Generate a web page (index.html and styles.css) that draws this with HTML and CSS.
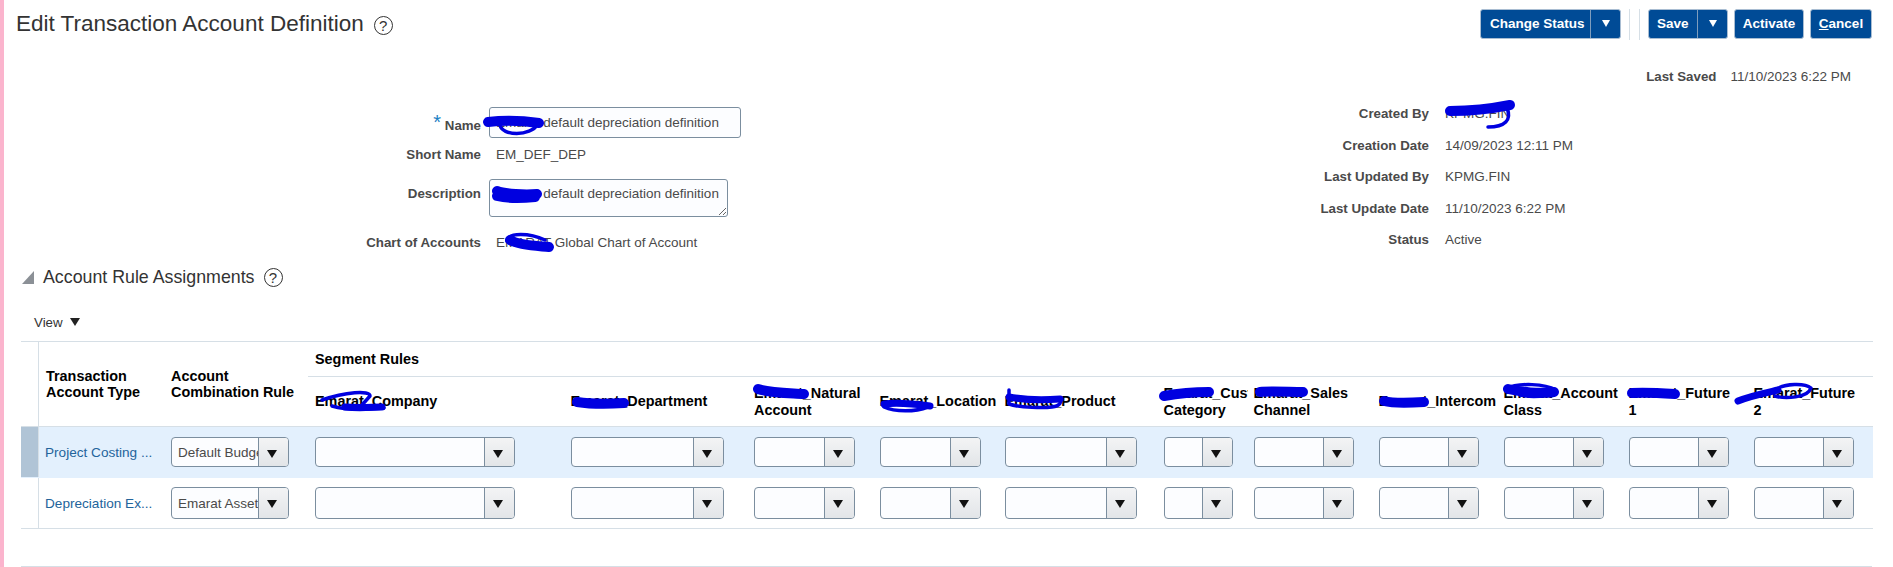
FILE: index.html
```html
<!DOCTYPE html>
<html lang="en">
<head>
<meta charset="utf-8">
<title>Edit Transaction Account Definition</title>
<link rel="stylesheet" href="styles.css">
</head>
<body>
<main class="page">
  <header class="page-head">
    <h1 class="title">Edit Transaction Account Definition</h1>
    <span class="help">?</span>
    <div class="actions">
      <div class="btn split status"><span class="btn-label">Change Status</span><span class="btn-arrow"></span></div>
      <span class="sep"></span>
      <div class="btn split save"><span class="btn-label">Save</span><span class="btn-arrow"></span></div>
      <div class="btn activate"><span class="btn-label">Activate</span></div>
      <div class="btn cancel"><span class="btn-label"><u>C</u>ancel</span></div>
    </div>
  </header>

  <div class="last-saved"><span class="label">Last Saved</span><span class="value">11/10/2023 6:22 PM</span></div>

  <section class="forms">
    <div class="form-left">
      <label class="label row-name"><span class="req">*</span> Name</label>
      <input class="text-input row-name" value="Emarat default depreciation definition">
      <span class="label row-short">Short Name</span>
      <span class="value row-short">EM_DEF_DEP</span>
      <label class="label label-top">Description</label>
      <textarea class="text-area">Emarat default depreciation definition</textarea>
      <span class="label row-chart">Chart of Accounts</span>
      <span class="value row-chart">EMARAT Global Chart of Account</span>
    </div>
    <div class="form-right">
      <span class="label">Created By</span><span class="value">KPMG.FIN</span>
      <span class="label">Creation Date</span><span class="value">14/09/2023 12:11 PM</span>
      <span class="label">Last Updated By</span><span class="value">KPMG.FIN</span>
      <span class="label">Last Update Date</span><span class="value">11/10/2023 6:22 PM</span>
      <span class="label">Status</span><span class="value">Active</span>
    </div>
  </section>

  <section class="section-head">
    <span class="disclosure"></span>
    <h2 class="section-title">Account Rule Assignments</h2>
    <span class="help">?</span>
  </section>

  <div class="toolbar"><span class="view">View</span><span class="view-arrow"></span></div>

  <table class="grid">
    <colgroup>
      <col class="c-sel"><col class="c-type"><col class="c-rule"><col class="c-company"><col class="c-dept"><col class="c-natural"><col class="c-loc"><col class="c-prod"><col class="c-cust"><col class="c-sales"><col class="c-inter"><col class="c-acct"><col class="c-f1"><col class="c-f2">
    </colgroup>
    <thead>
      <tr class="head-top">
        <th class="sel" rowspan="2"></th>
        <th class="wide-pad" rowspan="2">Transaction Account Type</th>
        <th class="wide-pad" rowspan="2">Account Combination Rule</th>
        <th colspan="11" class="wide-pad">Segment Rules</th>
      </tr>
      <tr class="head-sub">
        <th class="wide-pad">Emarat_Company</th>
        <th>Emarat_Department</th>
        <th>Emarat_Natural Account</th>
        <th>Emarat_Location</th>
        <th>Emarat_Product</th>
        <th>Emarat_Cust Category</th>
        <th>Emarat_Sales Channel</th>
        <th>Emarat_Intercom</th>
        <th>Emarat_Account Class</th>
        <th>Emarat_Future<br>1</th>
        <th>Emarat_Future<br>2</th>
      </tr>
    </thead>
    <tbody>
      <tr class="selected">
        <td class="sel"></td>
        <td><a class="link">Project Costing ...</a></td>
        <td class="wide-pad"><div class="combo w-rule"><input value="Default Budget Account"><span class="drop"></span></div></td>
        <td class="wide-pad"><div class="combo w-company"><input><span class="drop"></span></div></td>
        <td><div class="combo w-dept"><input><span class="drop"></span></div></td>
        <td><div class="combo w-natural"><input><span class="drop"></span></div></td>
        <td><div class="combo w-loc"><input><span class="drop"></span></div></td>
        <td><div class="combo w-prod"><input><span class="drop"></span></div></td>
        <td><div class="combo w-cust"><input><span class="drop"></span></div></td>
        <td><div class="combo w-std"><input><span class="drop"></span></div></td>
        <td><div class="combo w-std"><input><span class="drop"></span></div></td>
        <td><div class="combo w-std"><input><span class="drop"></span></div></td>
        <td><div class="combo w-std"><input><span class="drop"></span></div></td>
        <td><div class="combo w-std"><input><span class="drop"></span></div></td>
      </tr>
      <tr class="plain">
        <td class="sel"></td>
        <td><a class="link">Depreciation Ex...</a></td>
        <td class="wide-pad"><div class="combo w-rule"><input value="Emarat Asset Account"><span class="drop"></span></div></td>
        <td class="wide-pad"><div class="combo w-company"><input><span class="drop"></span></div></td>
        <td><div class="combo w-dept"><input><span class="drop"></span></div></td>
        <td><div class="combo w-natural"><input><span class="drop"></span></div></td>
        <td><div class="combo w-loc"><input><span class="drop"></span></div></td>
        <td><div class="combo w-prod"><input><span class="drop"></span></div></td>
        <td><div class="combo w-cust"><input><span class="drop"></span></div></td>
        <td><div class="combo w-std"><input><span class="drop"></span></div></td>
        <td><div class="combo w-std"><input><span class="drop"></span></div></td>
        <td><div class="combo w-std"><input><span class="drop"></span></div></td>
        <td><div class="combo w-std"><input><span class="drop"></span></div></td>
        <td><div class="combo w-std"><input><span class="drop"></span></div></td>
      </tr>
    </tbody>
  </table>
  <div class="table-foot"></div>
</main>

<svg class="scribbles" width="1893" height="567" viewBox="0 0 1893 567" aria-hidden="true">
  <g class="thick">
    <path d="M488 122 C505 120 525 121 539 123"/>
    <path d="M497 191 C505 194 525 195 537 194 M497 196 C510 199 525 198 535 197"/>
    <path d="M510 240 C520 246 540 246 549 247"/>
    <path d="M1450 111 C1470 111 1490 109 1510 105"/>
    <path d="M577 402 C590 404 610 404 624 403"/>
    <path d="M758 389 C770 393 790 393 804 394"/>
    <path d="M1164 396 C1175 394 1195 392 1209 392"/>
    <path d="M1260 392 C1270 391 1290 392 1303 392"/>
    <path d="M1384 401 C1395 404 1410 403 1424 402"/>
    <path d="M1508 389 C1520 392 1540 394 1554 392"/>
    <path d="M1632 393 C1645 392 1660 393 1675 394"/>
  </g>
  <g class="mid">
    <path d="M884 404 C900 402 915 404 930 406"/>
    <path d="M1009 397 C1025 400 1045 400 1060 399"/>
    <path d="M1738 401 C1750 396 1765 393 1778 390"/>
    <path d="M345 407 C360 408 372 407 382 407"/>
  </g>
  <g class="thin">
    <path d="M500 125 C502 136 530 137 538 124"/>
    <path d="M1507 108 C1512 120 1505 127 1488 127"/>
    <path d="M507 241 C508 232 530 233 545 240"/>
    <path d="M322 400 C345 392 370 390 370 396 L362 405 C370 407 378 406 384 408 C365 410 345 410 332 406"/>
    <path d="M884 407 C895 412 915 412 928 407"/>
    <path d="M1009 404 C1020 408 1045 408 1052 407 C1060 406 1062 402 1060 398 M1009 404 L1009 390"/>
    <path d="M1505 389 C1520 382 1545 384 1556 390 C1545 398 1530 397 1520 395"/>
    <path d="M1775 390 C1785 383 1805 383 1811 388 C1808 398 1785 399 1775 396"/>
  </g>
</svg>
</body>
</html>
```

FILE: styles.css
```css
* { box-sizing: border-box; }
html, body { margin: 0; padding: 0; height: 567px; overflow: hidden; background: #fff; }
body { position: relative; font-family: "Liberation Sans", Arial, sans-serif; font-size: 13.5px; color: #4a4a4a; }

.page { height: 567px; border-left: 4px solid #fbb4cd; overflow: hidden; }

/* page header */
.page-head { display: flex; align-items: flex-start; height: 56px; padding: 9px 21px 0 12px; }
.title { margin: 0; font-size: 22.5px; font-weight: 400; line-height: 30px; color: #333; }
.help {
  display: inline-flex; align-items: center; justify-content: center;
  width: 19px; height: 19px; border: 1.3px solid #333; border-radius: 50%;
  font-size: 15px; line-height: 1; color: #333;
}
.page-head .help { margin: 7px 0 0 10px; }

.actions { display: flex; align-items: flex-start; margin-left: auto; }
.btn {
  display: flex; align-items: center; height: 30px;
  background: #004b96; color: #fff; font-size: 13.5px; font-weight: 700;
  border: 1px solid #a9bdd2; border-radius: 3px; padding: 0 9px 2px;
}
.btn-label { white-space: nowrap; }
.split { padding: 0 0 2px 8px; }
.status { width: 141px; }
.status .btn-label { width: 103px; padding-left: 1px; }
.btn-arrow {
  position: relative; align-self: stretch; width: 30px; margin: 0 0 -2px 0;
  border-left: 1px solid #7f9dbd;
}
.btn-arrow::after {
  content: ""; position: absolute; left: 11px; top: 10px;
  border-style: solid; border-width: 7px 4.5px 0; border-color: #fff transparent transparent;
}
.sep {
  width: 11px; height: 31px; margin: 0 8px 0 8px;
  border-left: 1px solid #d6dfe6; border-right: 1px solid #d6dfe6;
}
.save { width: 80px; }
.save .btn-label { width: 41px; }
.activate { margin-left: 6px; width: 70px; justify-content: center; }
.cancel { margin-left: 6px; width: 62px; justify-content: center; }

/* labels and values */
.label { font-size: 13.3px; font-weight: 700; color: #4a4a4a; white-space: nowrap; }
.value { color: #4a4a4a; white-space: nowrap; }
.req { color: #1b7fc4; font-size: 20px; font-weight: 400; line-height: 1; vertical-align: 1px; }

.last-saved {
  display: flex; justify-content: flex-end; gap: 14px;
  height: 41px; padding: 13px 42px 0 0; line-height: 16px;
}

/* forms */
.forms { display: flex; align-items: flex-start; height: 165px; }
.form-left {
  display: grid; grid-template-columns: 477px auto; column-gap: 8px;
  justify-items: start; padding-top: 10px; width: 737px;
}
.form-left .label { justify-self: end; }
.form-left .row-name { align-self: center; }
.form-left .row-short { padding: 9px 0 16px; line-height: 16px; }
.form-left .value.row-short, .form-left .value.row-chart { margin-left: 7px; }
.form-left .row-chart { padding-top: 18px; line-height: 16px; }
.label-top { padding-top: 7px; line-height: 16px; }

.text-input, .text-area {
  display: block; font: inherit; color: #4a4a4a; background: #fcfdff;
  border: 1px solid #7b8e9f; border-radius: 3px; outline: none; margin: 0;
}
.text-input { width: 252px; height: 31px; padding: 0 6px; }
.text-area { width: 239px; height: 38px; padding: 6px 6px 0; line-height: 16px; overflow: hidden; }

.form-right {
  display: grid; grid-template-columns: 200px auto; column-gap: 16px;
  grid-auto-rows: 31.5px; align-items: center; margin: 1px 0 0 488px;
}
.form-right .label { justify-self: end; }

/* section */
.section-head { display: flex; align-items: center; height: 30px; padding-left: 18px; }
.disclosure {
  width: 0; height: 0; border-style: solid; border-width: 0 0 13px 12px;
  border-color: transparent transparent #8b9096;
}
.section-title { margin: 0 0 0 9px; font-size: 17.8px; font-weight: 400; color: #333; }
.section-head .help { margin-left: 9px; }

.toolbar { display: flex; align-items: center; height: 49px; padding: 11px 0 0 30px; color: #333; }
.view { font-size: 13.3px; }
.view-arrow {
  margin-left: 7px; border-style: solid; border-width: 8px 5.5px 0;
  border-color: #222 transparent transparent;
}

/* table */
.grid { table-layout: fixed; width: 1851px; margin-left: 17px; border-collapse: collapse; }
.c-sel { width: 17.5px; }
.c-type { width: 125.5px; }
.c-rule { width: 144px; }
.c-company { width: 256.5px; }
.c-dept { width: 183.5px; }
.c-natural { width: 125.5px; }
.c-loc { width: 125px; }
.c-prod { width: 159px; }
.c-cust { width: 90px; }
.c-sales, .c-inter, .c-acct, .c-f1, .c-f2 { width: 125px; }

.grid th, .grid td { padding: 0 0 0 6px; overflow: hidden; }
.grid th.wide-pad, .grid td.wide-pad { padding-left: 7px; }
.grid th {
  font-size: 14.4px; line-height: 16.3px; font-weight: 700; color: #000;
  text-align: left; vertical-align: middle; border-top: 1px solid #d6dfe6; border-bottom: 1px solid #d6dfe6;
}
.head-top th { height: 35px; }
.head-sub th { height: 50px; white-space: normal; }
.grid td { height: 51px; vertical-align: middle; border-bottom: 1px solid #d6dfe6; }
.grid .sel { padding: 0; border-right: 1px solid #d6dfe6; }
.selected td { background: #e3f0fd; border-bottom-color: #e3f0fd; }
.selected td.sel { background: #b0c4d6; }

.link { color: #23649b; white-space: nowrap; font-size: 13.6px; }

.combo {
  display: flex; height: 30.5px; background: #fcfdff;
  border: 1px solid #7b8e9f; border-radius: 4px; overflow: hidden;
}
.plain .combo { height: 31.5px; }
.combo input {
  flex: 1; min-width: 0; width: 0; height: 100%; border: 0; outline: none; margin: 0;
  padding: 0 0 0 6px; background: transparent; font: inherit; color: #4a4a4a;
}
.drop {
  position: relative; flex: none; width: 30px;
  background: linear-gradient(#f3f4f5, #e2e5e8); border-left: 1px solid #7b8e9f;
}
.drop::after {
  content: ""; position: absolute; left: 8px; top: 12px;
  border-style: solid; border-width: 8px 5px 0; border-color: #111 transparent transparent;
}
.w-rule { width: 117.5px; }
.w-company { width: 200px; }
.w-dept { width: 153px; }
.w-natural { width: 101px; }
.w-loc { width: 101px; }
.w-prod { width: 132px; }
.w-cust { width: 69px; }
.w-std { width: 100.5px; }

.table-foot { width: 1851px; margin: 37px 0 0 17px; border-top: 1px solid #d6dfe6; }

/* hand-drawn redaction strokes over the screenshot */
.scribbles { position: absolute; left: 0; top: 0; pointer-events: none; }
.scribbles path { fill: none; stroke: #0000e0; stroke-linecap: round; stroke-linejoin: round; }
.scribbles .thick path { stroke-width: 10; }
.scribbles .mid path { stroke-width: 7; }
.scribbles .thin path { stroke-width: 3.5; }
```
